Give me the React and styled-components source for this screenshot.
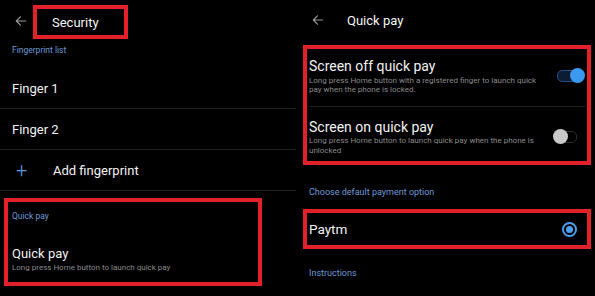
import React from "react";
import styled, { createGlobalStyle } from "styled-components";

const Global = createGlobalStyle`
  html, body {
    margin: 0;
    padding: 0;
    background: #000;
  }
  body {
    font-family: Roboto, "Noto Sans", sans-serif;
    color: #f2f2f2;
  }
`;

const Screen = styled.div`
  display: flex;
  width: 595px;
  height: 296px;
  background: #000;
  overflow: hidden;
`;

const Panel = styled.div`
  display: flex;
  flex-direction: column;
  width: ${(p) => p.width}px;
  flex-shrink: 0;
  & > * {
    flex-shrink: 0;
  }
`;

const Header = styled.div`
  display: flex;
  align-items: center;
  height: ${(p) => p.height}px;
  padding-left: ${(p) => p.indent}px;
  box-sizing: border-box;
`;

const Back = styled.svg`
  width: 14px;
  height: 14px;
  flex-shrink: 0;
`;

const Title = styled.div`
  font-size: 13px;
  color: #f4f4f4;
  margin-left: ${(p) => p.gap}px;
`;

const RedBox = styled.div`
  border: 4px solid #e3212b;
  box-sizing: border-box;
`;

const TitleBox = styled(RedBox)`
  display: flex;
  align-items: center;
  width: 95px;
  height: 34px;
  margin-top: 2px;
  margin-left: 5px;
  padding-left: 15px;
`;

const Label = styled.div`
  font-size: ${(p) => p.size || 8.5}px;
  line-height: 10px;
  color: #6d9ad6;
  height: ${(p) => p.height}px;
  padding-top: ${(p) => p.top}px;
  padding-left: ${(p) => p.indent}px;
  box-sizing: border-box;
`;

const Row = styled.div`
  display: flex;
  align-items: center;
  height: 40px;
  padding-left: ${(p) => p.indent || 12}px;
  border-bottom: 1px solid #1e1e1e;
  font-size: 13px;
  color: #f2f2f2;
`;

const Plus = styled.span`
  font-size: 20px;
  font-weight: 300;
  color: #5a9be0;
  width: 37px;
`;

const QuickBox = styled(RedBox)`
  width: 258px;
  height: 88px;
  margin: 7px 0 0 4px;
  padding: 9px 0 0 4px;
`;

const ItemTitle = styled.div`
  font-size: ${(p) => p.size || 13}px;
  color: #f2f2f2;
  line-height: ${(p) => p.lh || 16}px;
`;

const Sub = styled.div`
  font-size: 8px;
  line-height: ${(p) => p.lh || 10}px;
  margin-top: ${(p) => p.gap || 0}px;
  color: #8a8a8a;
`;

const OptionBox = styled(RedBox)`
  width: 288px;
  margin-left: 7px;
  margin-top: ${(p) => p.top || 0}px;
`;

const Option = styled.div`
  display: flex;
  align-items: ${(p) => (p.top ? "flex-start" : "center")};
  height: ${(p) => p.height}px;
  padding: ${(p) => p.top || 0}px ${(p) => p.right}px 0 0;
  box-sizing: border-box;
  border-bottom: ${(p) => (p.divider ? "1px solid #1e1e1e" : "none")};
  margin: 0 ${(p) => (p.divider ? 2 : 0)}px;
  & > div:first-child {
    margin-left: ${(p) => (p.divider ? 0 : 2)}px;
  }
`;

const OptionText = styled.div`
  flex: 1;
  padding-right: 12px;
`;

const Track = styled.div`
  position: relative;
  flex-shrink: 0;
  width: 20px;
  height: 10px;
  border-radius: 5px;
  border: 1.5px solid ${(p) => (p.on ? "#1f4f86" : "#2c2c2c")};
  background: ${(p) => (p.on ? "#0c1d33" : "#000")};
  margin-top: 12.5px;
`;

const Thumb = styled.div`
  position: absolute;
  top: 50%;
  left: ${(p) => (p.on ? "12px" : "-3px")};
  width: 15px;
  height: 15px;
  margin-top: -7.5px;
  border-radius: 50%;
  background: ${(p) => (p.on ? "#3b99f0" : "#c9c9c9")};
`;

const Radio = styled.div`
  width: 11px;
  height: 11px;
  border-radius: 50%;
  border: 2px solid #4aa0f0;
  display: flex;
  align-items: center;
  justify-content: center;
  &::after {
    content: "";
    width: 7px;
    height: 7px;
    border-radius: 50%;
    background: #4aa0f0;
  }
`;

const Arrow = () => (
  <Back viewBox="0 0 24 24" fill="none" stroke="#9a9a9a" strokeWidth="2" strokeLinecap="round" strokeLinejoin="round">
    <path d="M20 12H4M11 5l-7 7 7 7" />
  </Back>
);

const Toggle = ({ on }) => (
  <Track on={on}>
    <Thumb on={on} />
  </Track>
);

export default function App() {
  return (
    <>
      <Global />
      <Screen>
        <Panel width={296}>
          <Header height={42} indent={14}>
            <Arrow />
            <TitleBox>
              <Title>Security</Title>
            </TitleBox>
          </Header>
          <Label height={26} top={3} indent={12}>
            Fingerprint list
          </Label>
          <Row>Finger 1</Row>
          <Row>Finger 2</Row>
          <Row indent={16}>
            <Plus>+</Plus>
            Add fingerprint
          </Row>
          <QuickBox>
            <Label height={35} top={0} indent={0}>
              Quick pay
            </Label>
            <ItemTitle>Quick pay</ItemTitle>
            <Sub gap={1}>Long press Home button to launch quick pay</Sub>
          </QuickBox>
        </Panel>
        <Panel width={299}>
          <Header height={40} indent={15}>
            <Arrow />
            <Title gap={22}>Quick pay</Title>
          </Header>
          <OptionBox top={5}>
            <Option height={58} top={8} right={6} divider>
              <OptionText>
                <ItemTitle size={14} lh={18}>Screen off quick pay</ItemTitle>
                <Sub lh={9.5} gap={0.5}>
                  Long press Home button with a registered finger to launch quick pay when the phone is locked.
                </Sub>
              </OptionText>
              <Toggle on />
            </Option>
            <Option height={54} top={11} right={10}>
              <OptionText>
                <ItemTitle size={14} lh={18}>Screen on quick pay</ItemTitle>
                <Sub lh={10} gap={0}>
                  Long press Home button to launch quick pay when the phone is unlocked
                </Sub>
              </OptionText>
              <Toggle />
            </Option>
          </OptionBox>
          <Label size={9} height={44} top={22} indent={13}>
            Choose default payment option
          </Label>
          <OptionBox>
            <Option height={32} right={10}>
              <OptionText>
                <ItemTitle size={13.5}>Paytm</ItemTitle>
              </OptionText>
              <Radio />
            </Option>
          </OptionBox>
          <Label size={9} height={40} top={19} indent={13}>
            Instructions
          </Label>
        </Panel>
      </Screen>
    </>
  );
}
